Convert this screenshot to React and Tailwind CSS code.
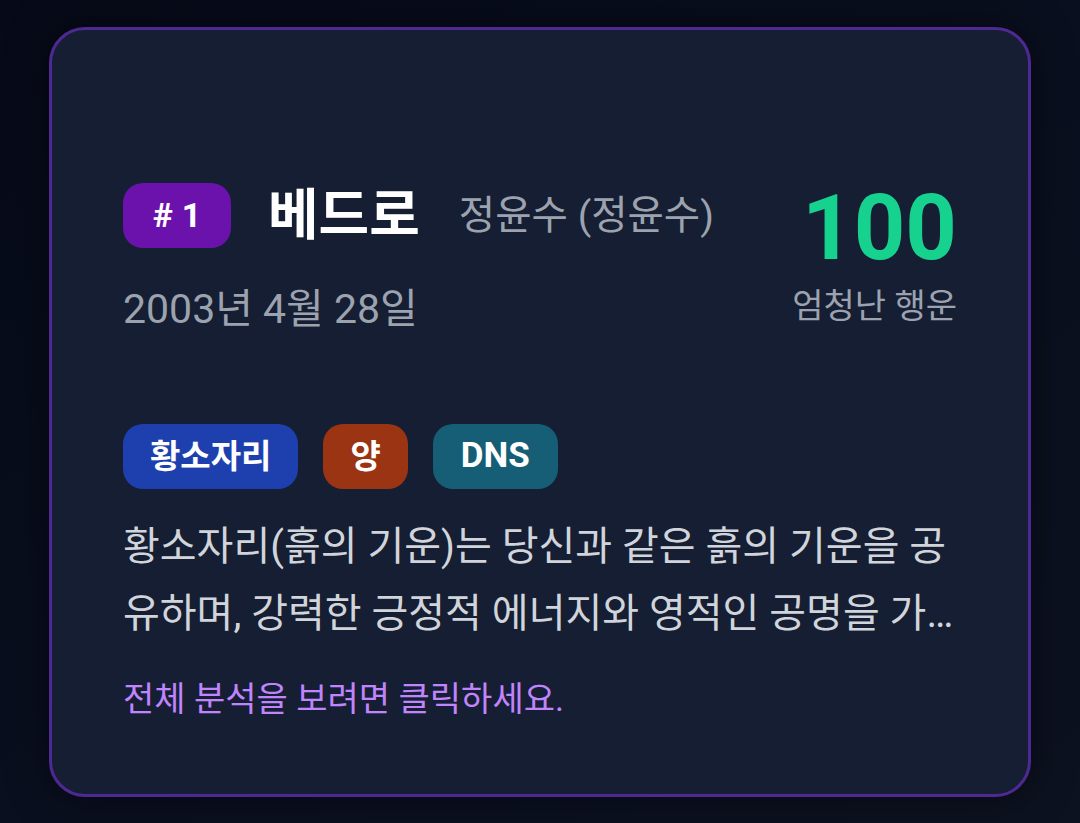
const TAGS = [
  { label: '황소자리', cls: 'bg-[#1e40af] px-[27px]' },
  { label: '양', cls: 'bg-[#9a3412] px-[27px]' },
  { label: 'DNS', cls: 'bg-[#155e75] px-[28px] text-[35px]' },
];

export default function App() {
  return (
    <div
      className="min-h-[823px] w-full bg-gradient-to-br from-[#060a18] via-[#0a0f1f] to-[#0d1220] pt-[27px]"
      style={{ fontFamily: 'Roboto, "Noto Sans CJK KR", sans-serif' }}
    >
      <div className="mx-auto h-[770px] w-[982px] rounded-[36px] border-[3px] border-[#4f2993] bg-[#151e32] px-[71px] pt-[153px] shadow-[0_0_40px_rgba(0,0,0,0.5)]">
        {/* Header */}
        <div className="flex items-start justify-between">
          <div>
            <div className="flex items-center">
              <span className="flex h-[65px] w-[108px] items-center justify-center gap-[9px] rounded-[20px] bg-[#6b12ad] text-[34px] font-bold text-white">
                <span>#</span>
                <span>1</span>
              </span>
              <span className="ml-[37px] text-[55px] font-bold leading-none text-white">베드로</span>
              <span className="ml-[39px] text-[39.5px] leading-none text-[#9ca3af]">정윤수 (정윤수)</span>
            </div>
            <p className="mt-[37px] text-[41px] leading-[48px] text-[#9ca3af]">2003년 4월 28일</p>
          </div>
          <div className="flex flex-col items-end">
            <span className="mt-[1px] text-[90px] font-bold leading-none text-[#16d28e]">100</span>
            <span className="mt-[12px] text-[34px] leading-[40px] text-[#9ca3af]">엄청난 행운</span>
          </div>
        </div>

        {/* Tags */}
        <div className="mt-[91px] flex gap-[25px]">
          {TAGS.map((t) => (
            <span
              key={t.label}
              className={`flex h-[65px] items-center rounded-[20px] text-[33px] font-bold text-white ${t.cls}`}
            >
              {t.label}
            </span>
          ))}
        </div>

        <p className="mt-[24px] line-clamp-2 text-[40px] leading-[67px] text-[#d1d5db]">
          황소자리(흙의 기운)는 당신과 같은 흙의 기운을 공유하며, 강력한 긍정적 에너지와 영적인 공명을 가져다 줍니다. 서로의 안정감을 존중하며 깊은 신뢰를 쌓을 수 있습니다.
        </p>

        <p className="mt-[30px] text-[34px] leading-[44px] text-[#c084fc]">전체 분석을 보려면 클릭하세요.</p>
      </div>
    </div>
  );
}
